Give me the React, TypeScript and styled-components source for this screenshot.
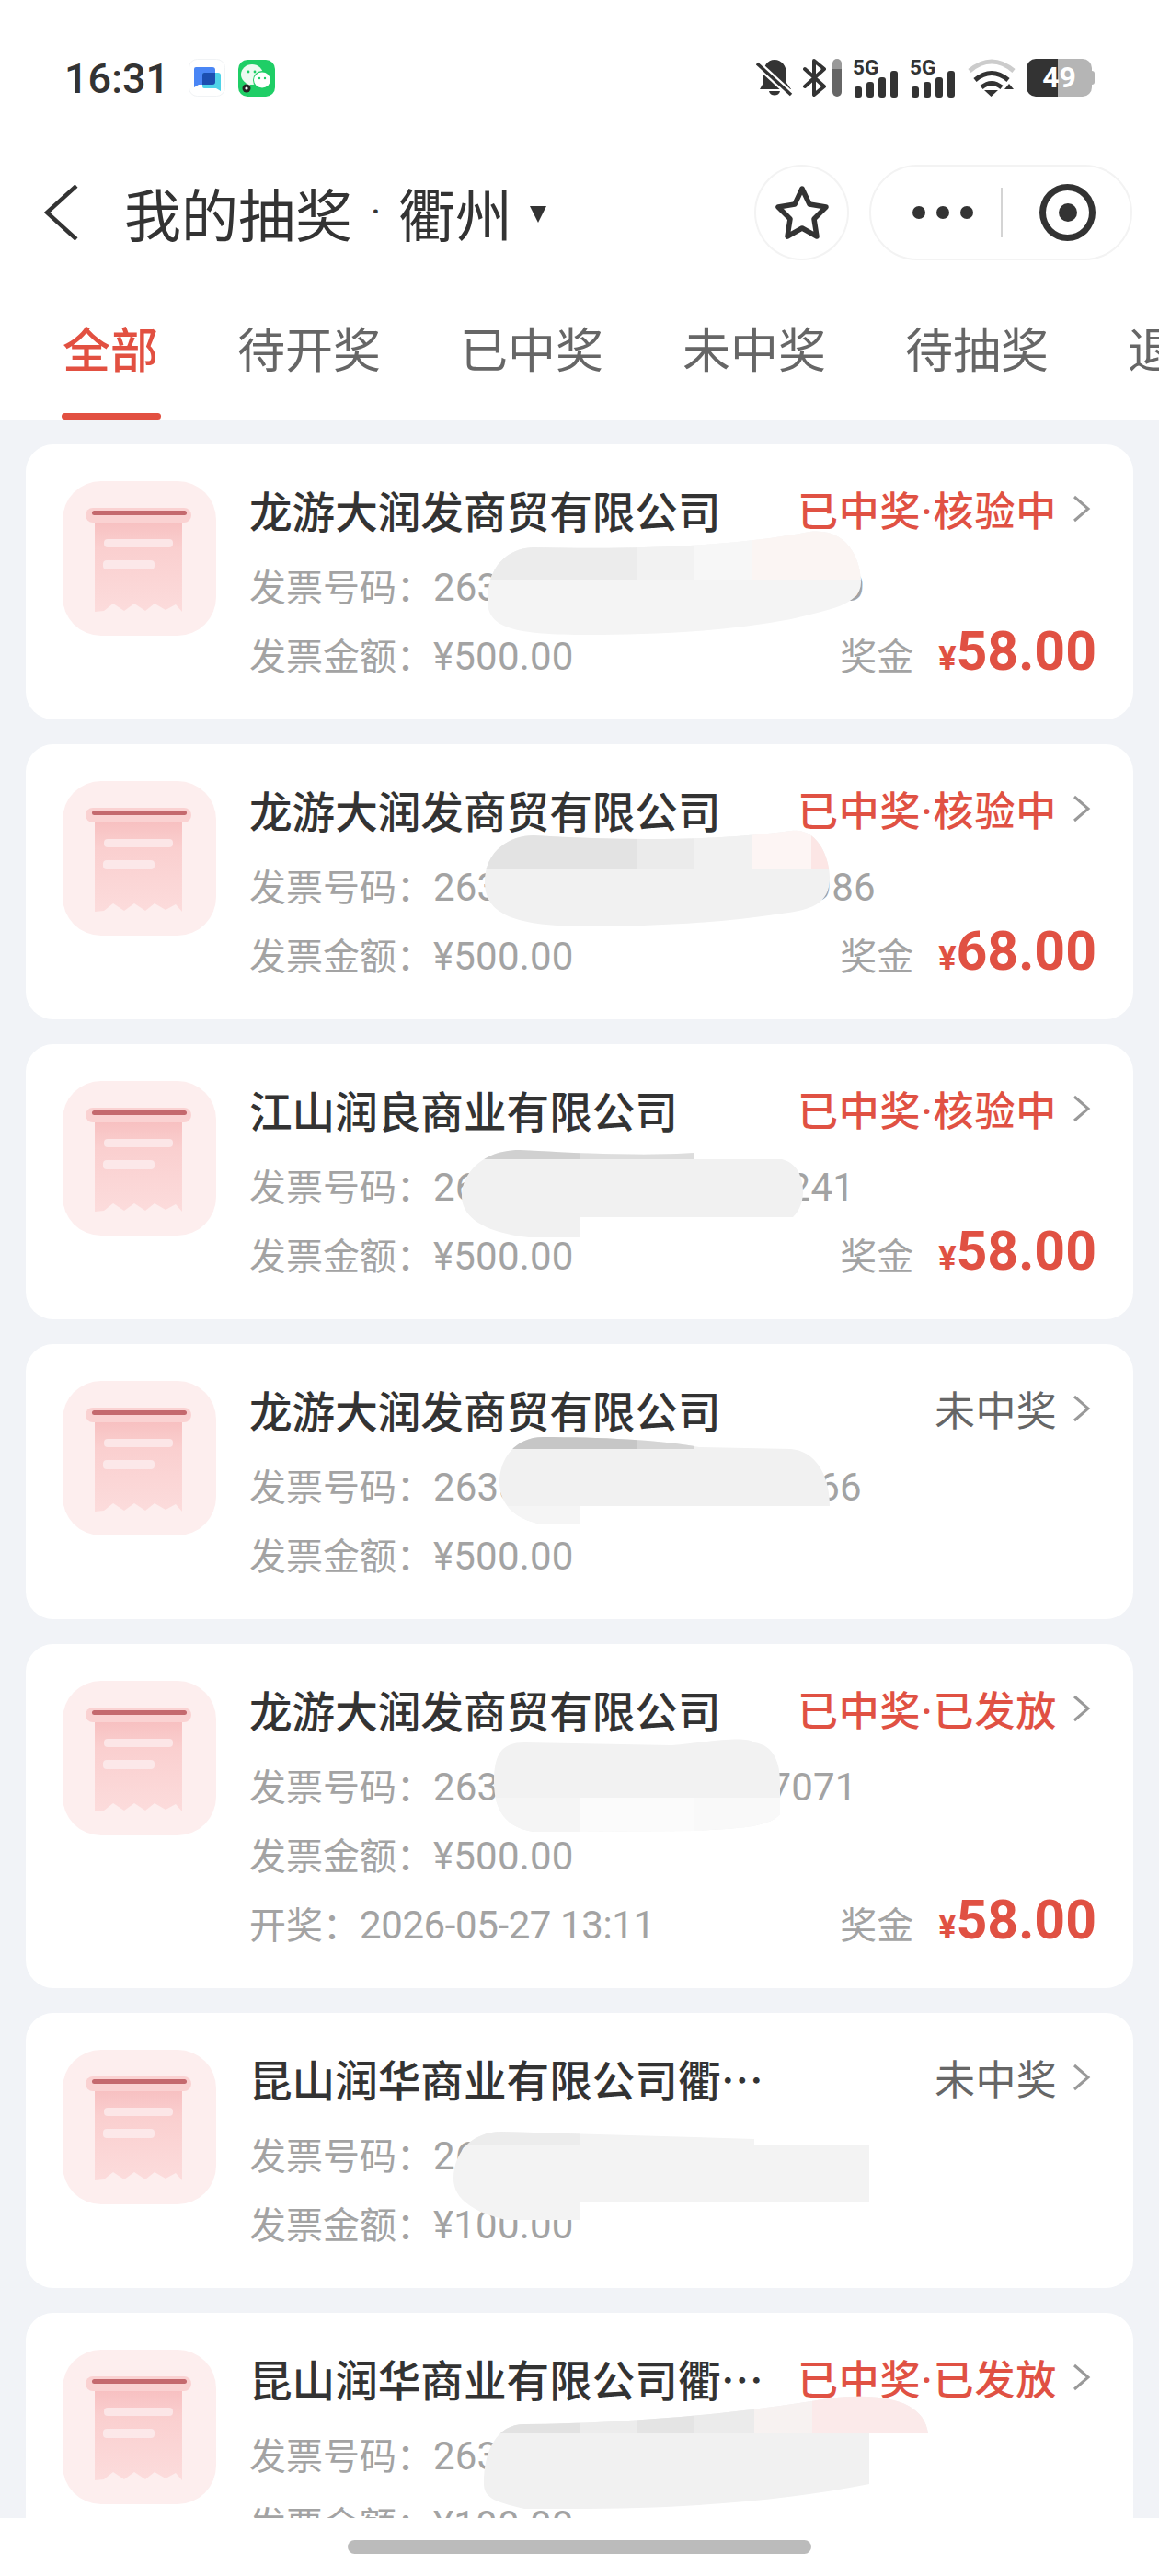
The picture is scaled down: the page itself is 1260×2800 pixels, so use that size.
import { useId } from "react";
import styled, { createGlobalStyle } from "styled-components";

const GlobalStyle = createGlobalStyle`
  html, body {
    margin: 0;
    padding: 0;
    background: #fff;
  }
  * {
    box-sizing: border-box;
  }
`;

const Page = styled.div`
  position: relative;
  width: 1260px;
  height: 2800px;
  overflow: hidden;
  background: #f1f3f7;
  font-family: Roboto, "Noto Sans CJK SC", sans-serif;
`;

const Header = styled.header`
  background: #fff;
`;

const StatusBar = styled.div`
  display: flex;
  align-items: flex-start;
  justify-content: space-between;
  height: 170px;
  padding: 64px 70px 0;
`;

const StatusLeft = styled.div`
  display: flex;
  align-items: center;
  height: 41px;
`;

const Time = styled.span`
  margin: 2px 21px 0 0;
  font-size: 45px;
  font-weight: 500;
  color: #333;
  line-height: 41px;
`;

const StatusRight = styled.div`
  display: flex;
  align-items: flex-start;
  height: 41px;
`;

const Glyph = styled.svg<{ $gapRight?: number; $gapLeft?: number }>`
  flex: none;
  margin-left: ${(p) => p.$gapLeft ?? 0}px;
  margin-right: ${(p) => p.$gapRight ?? 0}px;
`;

const SignalGlyph = styled.svg`
  flex: none;
  margin: -6px 12px 0 0;
`;

const SignalBar = styled.div`
  width: 10px;
  height: 41px;
  margin: 0 12px 0 5px;
  border-radius: 5px;
  background: linear-gradient(to bottom, #999 11px, #666 11px);
`;

const Battery = styled.div`
  position: relative;
  display: flex;
  align-items: center;
  justify-content: center;
  width: 71px;
  height: 41px;
  margin-right: 3px;
  border-radius: 10px;
  background: linear-gradient(to right, #333 34px, #b5b5b5 34px);
  color: #fff;
  font-size: 32px;
  font-weight: 700;
  line-height: 41px;

  &::after {
    content: "";
    position: absolute;
    right: -3px;
    top: 13px;
    width: 3px;
    height: 15px;
    border-radius: 0 3px 3px 0;
    background: #b5b5b5;
  }
`;

const NavBar = styled.div`
  display: flex;
  align-items: center;
  height: 122px;
  padding: 0 29px 0 48px;
`;

const BackIcon = styled.svg`
  width: 38px;
  height: 60px;
  margin-right: 49px;
  flex: none;
`;

const NavTitle = styled.h1`
  display: flex;
  align-items: center;
  flex: 1;
  margin: 0;
  font-family: "Noto Sans CJK SC", sans-serif;
  font-size: 62px;
  font-weight: 400;
  line-height: 70px;
  color: #333;
`;

const TitleDot = styled.span`
  margin: 0 19px 0 20px;
  font-family: Roboto, sans-serif;
  font-size: 42px;
`;

const DropArrow = styled.i`
  width: 0;
  height: 0;
  margin: 4px 0 0 19px;
  border-left: 9px solid transparent;
  border-right: 9px solid transparent;
  border-top: 18px solid #333;
`;

const StarButton = styled.div`
  display: flex;
  align-items: center;
  justify-content: center;
  width: 103px;
  height: 104px;
  margin-right: 22px;
  border: 2px solid #f3f3f3;
  border-radius: 50%;
`;

const Capsule = styled.div`
  display: flex;
  align-items: center;
  width: 286px;
  height: 104px;
  padding-left: 45px;
  border: 2px solid #f3f3f3;
  border-radius: 52px;
`;

const MoreDot = styled.i`
  width: 14px;
  height: 14px;
  margin-right: 12px;
  border-radius: 50%;
  background: #333;
`;

const CapsuleDivider = styled.i`
  width: 2px;
  height: 54px;
  margin: 0 40px 0 18px;
  background: #d4d4d4;
`;

const TargetRing = styled.div`
  display: flex;
  align-items: center;
  justify-content: center;
  width: 61px;
  height: 62px;
  border: 7px solid #333;
  border-radius: 50%;
`;

const TargetDot = styled.i`
  width: 20px;
  height: 20px;
  border-radius: 50%;
  background: #333;
`;

const Tabs = styled.nav`
  display: flex;
  gap: 86px;
  height: 164px;
  padding-left: 68px;
  overflow: hidden;
`;

const Tab = styled.div<{ $active?: boolean }>`
  position: relative;
  flex: none;
  padding-top: 53px;
  font-family: "Noto Sans CJK SC", sans-serif;
  font-size: 52px;
  line-height: 66px;
  font-weight: ${(p) => (p.$active ? 500 : 400)};
  color: ${(p) => (p.$active ? "#e25041" : "#666")};

  ${(p) =>
    p.$active &&
    `&::after {
      content: "";
      position: absolute;
      left: -1px;
      right: -3px;
      bottom: 0;
      height: 7px;
      border-radius: 4px;
      background: #e25041;
    }`}
`;

const List = styled.main`
  display: flex;
  flex-direction: column;
  gap: 27px;
  padding: 27px 28px;
`;

const Card = styled.section`
  position: relative;
  display: flex;
  gap: 36px;
  padding: 40px 40px 31px 40px;
  border-radius: 30px;
  background: #fff;
`;

const ReceiptBox = styled.svg`
  flex: none;
  width: 167px;
  height: 168px;
`;

const CardBody = styled.div`
  flex: 1;
  min-width: 0;
`;

const CardHead = styled.div`
  display: flex;
  align-items: center;
  justify-content: space-between;
  height: 60px;
  margin-bottom: 18px;
`;

const Company = styled.div`
  font-family: "Noto Sans CJK SC", sans-serif;
  font-size: 46.6px;
  font-weight: 500;
  color: #333;
  white-space: nowrap;
`;

const StatusWrap = styled.div`
  display: flex;
  align-items: center;
`;

const StatusText = styled.span<{ $won: boolean }>`
  font-family: Roboto, "Noto Sans CJK SC", sans-serif;
  font-size: 44px;
  letter-spacing: ${(p) => (p.$won ? "0.8px" : "0.3px")};
  font-weight: ${(p) => (p.$won ? 500 : 400)};
  color: ${(p) => (p.$won ? "#e05143" : "#666")};
  white-space: nowrap;
`;

const Chevron = styled.svg`
  width: 20px;
  height: 30px;
  margin: 0 6px 0 17px;
`;

const InfoRow = styled.div`
  display: flex;
  align-items: baseline;
  justify-content: space-between;
  height: 75px;
  line-height: 75px;
  font-size: 40px;
  color: #a3a3a3;
  white-space: nowrap;
`;

const Digits = styled.span<{ $tight?: boolean }>`
  font-size: 42px;
  letter-spacing: ${(p) => (p.$tight ? "-0.4px" : "0.2px")};
`;

const MaskGap = styled.span<{ $w: number }>`
  display: inline-block;
  width: ${(p) => p.$w}px;
`;

const Prize = styled.div`
  display: flex;
  align-items: baseline;
`;

const PrizeLabel = styled.span`
  margin-right: 27px;
  color: #a3a3a3;
`;

const PrizeYen = styled.span`
  font-size: 36px;
  font-weight: 700;
  color: #e05143;
`;

const PrizeValue = styled.span`
  font-size: 59px;
  line-height: 63px;
  font-weight: 700;
  color: #e05143;
`;

const SmearLayer = styled.svg`
  position: absolute;
  left: 0;
  top: 0;
  overflow: visible;
  pointer-events: none;
`;

const HomeBar = styled.div`
  position: absolute;
  left: 0;
  right: 0;
  bottom: 0;
  display: flex;
  align-items: center;
  justify-content: center;
  height: 63px;
  background: #fff;
`;

const HomePill = styled.div`
  width: 504px;
  height: 15px;
  border-radius: 8px;
  background: #bbb;
`;

type Patch = [number, number, number, number, string];

type Lottery = {
  company: string;
  status: string;
  won: boolean;
  head: string;
  gap?: number;
  tail?: string;
  amount: string;
  drawn?: string;
  prize?: string;
  smear: string;
  smearFill: string;
  patches: Patch[];
};

const tabs = ["全部", "待开奖", "已中奖", "未中奖", "待抽奖", "退款"];

const lotteries: Lottery[] = [
  {
    company: "龙游大润发商贸有限公司",
    status: "已中奖·核验中",
    won: true,
    head: "263",
    gap: 374,
    tail: "9",
    amount: "¥500.00",
    prize: "58.00",
    smear:
      "M530 170C530 125 560 112 580 112C700 115 800 110 880 95C925 90 936 130 936 150C936 175 900 180 860 190C780 205 700 207 640 207C560 207 530 200 530 170Z",
    smearFill: "#f4f4f4",
    patches: [
      [530, 90, 163, 57, "#ececec"],
      [693, 90, 62, 57, "#f2f2f2"],
      [755, 90, 63, 57, "#f7f7f7"],
      [818, 90, 120, 57, "#fbf5f3"],
    ],
  },
  {
    company: "龙游大润发商贸有限公司",
    status: "已中奖·核验中",
    won: true,
    head: "263",
    gap: 338,
    tail: "986",
    amount: "¥500.00",
    prize: "68.00",
    smear:
      "M527 150C527 115 555 99 580 99C680 105 780 105 860 94C890 90 902 125 902 145C902 175 880 180 850 184C780 195 700 198 640 198C560 198 527 185 527 150Z",
    smearFill: "#f1f1f1",
    patches: [
      [527, 90, 166, 46, "#e3e3e3"],
      [693, 90, 62, 46, "#ebebeb"],
      [755, 90, 63, 46, "#f1f1f1"],
      [818, 90, 64, 46, "#fdf5f4"],
      [882, 90, 20, 46, "#fce6e5"],
    ],
  },
  {
    company: "江山润良商业有限公司",
    status: "已中奖·核验中",
    won: true,
    head: "26",
    gap: 339,
    tail: "241",
    amount: "¥500.00",
    prize: "58.00",
    smear:
      "M502 165C502 140 525 115 565 115C620 118 700 122 755 118V125H850C870 130 873 150 873 160C873 170 870 180 862 188H630V210H575C530 205 502 190 502 165Z",
    smearFill: "#f1f1f1",
    patches: [
      [500, 100, 130, 25, "#d0d0d0"],
      [630, 100, 125, 25, "#dddddd"],
    ],
  },
  {
    company: "龙游大润发商贸有限公司",
    status: "未中奖",
    won: false,
    head: "2633",
    gap: 323,
    tail: "66",
    amount: "¥500.00",
    smear:
      "M543 150C543 125 560 101 590 101C650 101 720 104 760 112L860 114C885 116 902 140 902 176H630V196H590C555 190 543 170 543 150Z",
    smearFill: "#f1f1f1",
    patches: [
      [540, 95, 153, 19, "#c6c6c6"],
      [693, 95, 62, 19, "#d5d5d5"],
      [540, 176, 90, 25, "#f5f5f5"],
    ],
  },
  {
    company: "龙游大润发商贸有限公司",
    status: "已中奖·已发放",
    won: true,
    head: "263",
    gap: 294,
    tail: "7071",
    amount: "¥500.00",
    drawn: "2026-05-27 13:11",
    prize: "58.00",
    smear:
      "M537 150C537 120 545 107 570 107L730 110C780 105 810 100 820 107C842 110 848 130 848 150V185C835 200 800 200 760 203L630 204H580C550 200 537 180 537 150Z",
    smearFill: "#f2f2f2",
    patches: [
      [535, 167, 95, 40, "#f5f5f5"],
      [630, 167, 125, 40, "#fbfbfb"],
      [755, 167, 105, 40, "#f9f9f9"],
    ],
  },
  {
    company: "昆山润华商业有限公司衢…",
    status: "未中奖",
    won: false,
    head: "26",
    amount: "¥100.00",
    smear:
      "M493 180C493 150 515 129 545 129L820 137V143H945V205H630V225H550C510 215 493 200 493 180Z",
    smearFill: "#f3f3f3",
    patches: [[490, 125, 140, 18, "#ececec"]],
  },
  {
    company: "昆山润华商业有限公司衢…",
    status: "已中奖·已发放",
    won: true,
    head: "263",
    amount: "¥100.00",
    smear:
      "M526 185C526 150 540 121 570 121C680 120 800 110 900 93C970 85 1005 100 1009 131H945V186C850 205 740 213 620 213H570C535 205 526 200 526 185Z",
    smearFill: "#f1f1f1",
    patches: [
      [526, 85, 104, 46, "#e2e2e2"],
      [630, 85, 63, 46, "#ececec"],
      [693, 85, 62, 46, "#e4e4e4"],
      [755, 85, 65, 46, "#ebebeb"],
      [820, 85, 63, 46, "#f7f2f1"],
      [883, 85, 130, 46, "#fbeaea"],
    ],
  },
];

function ReceiptIcon() {
  const id = useId().replace(/[^a-z0-9]/gi, "");
  return (
    <ReceiptBox viewBox="0 0 167 168">
      <defs>
        <linearGradient id={id} x1="0" y1="0" x2="0" y2="1">
          <stop offset="0" stopColor="#f7bfc0" />
          <stop offset="0.3" stopColor="#facfcf" />
          <stop offset="1" stopColor="#fcdcdc" />
        </linearGradient>
      </defs>
      <rect width="167" height="168" rx="42" fill="#fdeeee" />
      <path
        d="M35 42H130V142L123 134L112 140L100 133L90 141L78 133L67 141L55 133L45 141L35 142Z"
        fill={`url(#${id})`}
      />
      <rect x="25" y="29" width="115" height="16" rx="8" fill="#fad2d2" />
      <rect x="32" y="32" width="103" height="5" rx="2.5" fill="#c4696e" />
      <rect x="45" y="63" width="75" height="9" rx="4" fill="#fce6e7" />
      <rect x="44" y="86" width="56" height="10" rx="4" fill="#fce8e9" />
    </ReceiptBox>
  );
}

function Smear({ d, fill, patches }: { d: string; fill: string; patches: Patch[] }) {
  const id = useId().replace(/[^a-z0-9]/gi, "");
  return (
    <SmearLayer width="1204" height="400" viewBox="28 0 1204 400">
      <defs>
        <clipPath id={id}>
          <path d={d} />
        </clipPath>
      </defs>
      <path d={d} fill={fill} />
      <g clipPath={`url(#${id})`}>
        {patches.map(([x, y, w, h, c]) => (
          <rect key={`${x}-${y}`} x={x} y={y} width={w} height={h} fill={c} />
        ))}
      </g>
    </SmearLayer>
  );
}

function SignalIcon() {
  return (
    <SignalGlyph width="50" height="48" viewBox="0 -6 50 48">
      <text x="0" y="17" fontFamily="Roboto, sans-serif" fontSize="22.5" fontWeight="700" fill="#333">
        5G
      </text>
      <rect x="2" y="30" width="8" height="12" rx="3" fill="#333" />
      <rect x="15" y="25" width="8" height="17" rx="3" fill="#333" />
      <rect x="28" y="20" width="8" height="22" rx="3" fill="#333" />
      <rect x="41" y="13" width="8" height="29" rx="3" fill="#333" />
    </SignalGlyph>
  );
}

function LotteryCard({ item }: { item: Lottery }) {
  const prize = item.prize && (
    <Prize>
      <PrizeLabel>奖金</PrizeLabel>
      <PrizeYen>¥</PrizeYen>
      <PrizeValue>{item.prize}</PrizeValue>
    </Prize>
  );

  return (
    <Card>
      <ReceiptIcon />
      <CardBody>
        <CardHead>
          <Company>{item.company}</Company>
          <StatusWrap>
            <StatusText $won={item.won}>{item.status}</StatusText>
            <Chevron viewBox="0 0 20 30">
              <path d="M2 2L17 15L2 28" fill="none" stroke="#999" strokeWidth="3" />
            </Chevron>
          </StatusWrap>
        </CardHead>
        <InfoRow>
          <span>
            发票号码：
            <Digits>
              {item.head}
              {item.gap && <MaskGap $w={item.gap} />}
              {item.tail}
            </Digits>
          </span>
        </InfoRow>
        <InfoRow>
          <span>
            发票金额：<Digits>{item.amount}</Digits>
          </span>
          {!item.drawn && prize}
        </InfoRow>
        {item.drawn && (
          <InfoRow>
            <span>
              开奖：<Digits $tight>{item.drawn}</Digits>
            </span>
            {prize}
          </InfoRow>
        )}
      </CardBody>
      <Smear d={item.smear} fill={item.smearFill} patches={item.patches} />
    </Card>
  );
}

export default function App() {
  return (
    <Page>
      <GlobalStyle />
      <Header>
        <StatusBar>
          <StatusLeft>
            <Time>16:31</Time>
            <Glyph width="40" height="41" viewBox="0 0 40 41" $gapRight={14}>
              <rect x="0.5" y="0.5" width="39" height="40" rx="9" fill="#fff" stroke="#f1f3f5" />
              <path d="M8 9H26Q29 9 29 12V25Q29 28 26 28H11L6 31V11Q6 9 8 9Z" fill="#4a86f5" />
              <path d="M17 15H32Q35 15 35 18V35L30 32H17Q15 32 15 30V17Q15 15 17 15Z" fill="#4fd3e8" />
              <path d="M17 15H29V25Q29 28 26 28H15V17Q15 15 17 15Z" fill="#1b4eb0" />
            </Glyph>
            <Glyph width="40" height="41" viewBox="0 0 40 41">
              <rect y="1" width="40" height="40" rx="10" fill="#1fce66" />
              <ellipse cx="15" cy="17" rx="12" ry="11" fill="#eefaf1" />
              <path d="M9 25L8 31L15 27Z" fill="#eefaf1" />
              <circle cx="26" cy="23" r="10" fill="#1fce66" />
              <ellipse cx="26" cy="23" rx="9" ry="8.5" fill="#fff" />
              <circle cx="11" cy="14" r="1.4" fill="#1fce66" />
              <circle cx="18" cy="14" r="1.4" fill="#1fce66" />
              <circle cx="23" cy="21" r="1.2" fill="#1fce66" />
              <circle cx="29" cy="21" r="1.2" fill="#1fce66" />
              <circle cx="9" cy="32" r="4.5" fill="#222" />
              <circle cx="9" cy="32" r="1.6" fill="#fff" />
            </Glyph>
          </StatusLeft>
          <StatusRight>
            <Glyph width="40" height="41" viewBox="0 0 40 41" $gapRight={10}>
              <path d="M20 1C28 1 33 8 33 16V26L38 33H4L8 26V16C8 8 12 1 20 1Z" fill="#333" />
              <path d="M14 35H26C25 41 15 41 14 35Z" fill="#333" />
              <path d="M2 6L38 39" stroke="#fff" strokeWidth="8" />
              <path d="M1 5L38 39" stroke="#333" strokeWidth="3.5" />
            </Glyph>
            <Glyph width="28" height="41" viewBox="0 0 28 41">
              <path
                d="M3 11L24 30L13 39V2L24 11L3 30"
                fill="none"
                stroke="#333"
                strokeWidth="4"
                strokeLinejoin="round"
                strokeLinecap="round"
              />
            </Glyph>
            <SignalBar />
            <SignalIcon />
            <SignalIcon />
            <Glyph width="52" height="41" viewBox="0 0 52 41" $gapLeft={1} $gapRight={12}>
              <path d="M2 13Q26 -7 50 13" fill="none" stroke="#ccc" strokeWidth="5" />
              <path d="M8 23Q26 8 44 23" fill="none" stroke="#333" strokeWidth="5" />
              <path d="M15 31Q26 22 37 31" fill="none" stroke="#333" strokeWidth="5" />
              <path d="M18 34H33L25.5 41Z" fill="#333" />
              <path d="M40 33H50L45 27Z" fill="#333" />
            </Glyph>
            <Battery>49</Battery>
          </StatusRight>
        </StatusBar>
        <NavBar>
          <BackIcon viewBox="0 0 38 60">
            <path d="M35 1L3 30L35 59" fill="none" stroke="#333" strokeWidth="4.5" />
          </BackIcon>
          <NavTitle>
            我的抽奖
            <TitleDot>·</TitleDot>
            衢州
            <DropArrow />
          </NavTitle>
          <StarButton>
            <svg width="58" height="60" viewBox="0 0 58 60">
              <polygon
                points="29,4 37,21 55,24 42,37 45,56 29,47 13,56 16,37 3,24 21,21"
                fill="none"
                stroke="#333"
                strokeWidth="5.5"
                strokeLinejoin="round"
              />
            </svg>
          </StarButton>
          <Capsule>
            <MoreDot />
            <MoreDot />
            <MoreDot />
            <CapsuleDivider />
            <TargetRing>
              <TargetDot />
            </TargetRing>
          </Capsule>
        </NavBar>
        <Tabs>
          {tabs.map((t, i) => (
            <Tab key={t} $active={i === 0}>
              {t}
            </Tab>
          ))}
        </Tabs>
      </Header>
      <List>
        {lotteries.map((item, i) => (
          <LotteryCard key={i} item={item} />
        ))}
      </List>
      <HomeBar>
        <HomePill />
      </HomeBar>
    </Page>
  );
}
